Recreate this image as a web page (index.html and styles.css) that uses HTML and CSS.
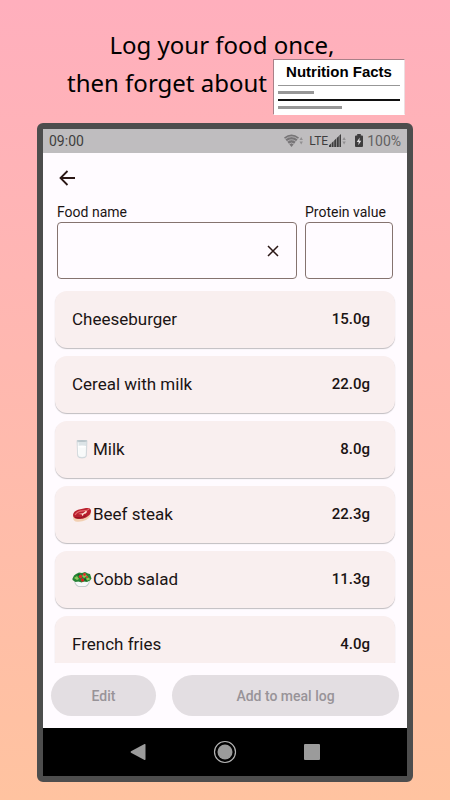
FILE: index.html
```html
<!DOCTYPE html>
<html lang="en">
<head>
    <meta charset="UTF-8">
    <meta name="viewport" content="width=device-width, initial-scale=1.0">
    <title>Food log</title>
    <link rel="stylesheet" href="styles.css">
</head>
<body>
    <header class="promo">
        <h1 class="promo-title">Log your food once,</h1>
        <div class="promo-row">
            <p class="promo-text">then forget about</p>
            <div class="facts">
                <strong class="facts-title">Nutrition Facts</strong>
                <div class="facts-line thin"></div>
                <div class="facts-line short"></div>
                <div class="facts-line bold"></div>
                <div class="facts-line medium"></div>
            </div>
        </div>
    </header>

    <main class="phone">
        <div class="status-bar">
            <span class="clock">09:00</span>
            <div class="status-icons">
                <svg width="21" height="14" viewBox="0 0 21 14" fill="#777577">
                    <path d="M0 3.5Q7.5-2.5 15 3.5L7.5 13z"/>
                    <path d="M1 5.2Q7.5.2 14 5.2M3 7.5Q7.5 4 12 7.5M5 10Q7.5 8 10 10" fill="none" stroke="#bfbdbf" stroke-width=".8"/>
                    <path d="M15.500 6l1.700-3 1.700 3zM15.500 7.500l1.700 3 1.700-3z" fill="#918f91"/>
                </svg>
                <span class="lte">LTE</span>
                <svg class="signal" width="18" height="14" viewBox="0 0 18 14" fill="#3e3d3e">
                    <path d="M0 13v-1.500l2-1.900V13zM2.600 13V9l2-1.900V13zM5.200 13V6.500l2-1.900V13zM7.800 13V4l2-1.900V13z"/>
                    <path d="M10.400 13V1.500L12 0v13z"/>
                    <path d="M13.400 6l1.700-3 1.700 3zM13.400 7.500l1.700 3 1.700-3z" fill="#918f91"/>
                </svg>
                <svg class="battery" width="8" height="14" viewBox="0 0 8 14">
                    <path d="M2.200 0h3.600v1.500H7q1 0 1 1V12q0 1-1 1H1q-1 0-1-1V2.500q0-1 1-1h1.200z" fill="#3e3d3e"/>
                    <path d="M4.700 3.500L1.700 8h2L3.300 11.300 6.300 6.800h-2z" fill="#e0dee0"/>
                </svg>
                <span class="percent">100%</span>
            </div>
        </div>

        <div class="toolbar">
            <button class="icon-button" type="button" aria-label="Back">
                <svg width="18" height="18" viewBox="0 0 18 18" fill="none" stroke="#2b1715" stroke-width="1.800">
                    <path d="M17 9H3M9.500 2L2.500 9l7 7"/>
                </svg>
            </button>
        </div>

        <form class="search">
            <div class="field field-name">
                <label for="foodName">Food name</label>
                <div class="box">
                    <input type="text" id="foodName" name="foodName">
                    <button class="icon-button clear" type="button" aria-label="Clear">
                        <svg width="12" height="12" viewBox="0 0 12 12" fill="none" stroke="#2b1715" stroke-width="1.500">
                            <path d="M1 1l10 10M11 1L1 11"/>
                        </svg>
                    </button>
                </div>
            </div>
            <div class="field field-protein">
                <label for="protein">Protein value</label>
                <div class="box">
                    <input type="text" id="protein" name="protein">
                </div>
            </div>
        </form>

        <ul class="foods">
            <li class="food"><span class="name">Cheeseburger</span><span class="grams">15.0g</span></li>
            <li class="food"><span class="name">Cereal with milk</span><span class="grams">22.0g</span></li>
            <li class="food">
                <span class="name">
                    <svg class="emoji" width="21" height="20" viewBox="0 0 21 20">
                        <path d="M5 1.500h10l-.7 15.500q-.2 2-4.300 2t-4.300-2z" fill="#dce4e7" stroke="#c3cdd1" stroke-width=".6"/>
                        <path d="M5.900 7.500h8.200l-.5 9q-.2 1.400-3.600 1.400t-3.600-1.400z" fill="#f8fafa"/>
                        <ellipse cx="10" cy="7.500" rx="4.100" ry="1" fill="#fff"/>
                        <ellipse cx="10" cy="1.900" rx="5" ry="1" fill="#b9c5ca"/>
                        <path d="M6.200 3.500l.3 12" stroke="#fff" stroke-width=".7"/>
                    </svg>Milk</span>
                <span class="grams">8.0g</span>
            </li>
            <li class="food">
                <span class="name">
                    <svg class="emoji" width="21" height="20" viewBox="0 0 21 20">
                        <path d="M1 13Q1 8 6 6.300L15 4q4-.4 4 4.500 0 4.500-5 7.500-5 2.500-10.500 1.500Q1 16.500 1 13z" fill="#f2d0b2"/>
                        <path d="M1 10.800Q1.500 7.400 6 5.800L14 4q5-.6 5 2.800 0 4-5 6.700-4.500 2.200-9.500 1.300Q1 14 1 10.800z" fill="#b91f2e"/>
                        <path d="M3 11q2-4 8-4.200Q16 6.600 17 5" fill="none" stroke="#e66a6d" stroke-width="1.200"/>
                        <path d="M6 10l5-.8 3-2.400 1.200.9-1.500 1.800-2 .5-1 2.300-1.100-2z" fill="#ffe7d7"/>
                        <path d="M3 13.500q6 1.500 11-1.800" fill="none" stroke="#8d1422"/>
                    </svg>Beef steak</span>
                <span class="grams">22.3g</span>
            </li>
            <li class="food">
                <span class="name">
                    <svg class="emoji" width="21" height="20" viewBox="0 0 21 20">
                        <path d="M1.500 9h17q-.6 7.500-5 9h-7Q2.100 16.500 1.500 9z" fill="#c5cccc"/>
                        <path d="M2.500 11q7.500 4 15 0-1 4.500-4.200 6H6.700Q3.500 15.500 2.500 11z" fill="#f7f9f9"/>
                        <path d="M.5 9.500L2 6.500l2-1.500 3-1.500 3 .5 3-1 3 1.500 2 .5 1.500 4.500-1.500 2-3 1.500-3-.5-2.500 1-3-1-3 .5-3-2z" fill="#268333"/>
                        <path d="M2 9l3-2 2 3-2 1zM10 7l3-3 2 3-3 2zM14 9.500l3-1 1 2-3 1z" fill="#8aca58"/>
                        <path d="M5 6l4 1-2-2zM12 11l3 1-2-3z" fill="#0d5424"/>
                        <circle cx="8.500" cy="7.500" r="1.700" fill="#e22c28"/>
                        <circle cx="12.500" cy="5.500" r="1.400" fill="#e22c28"/>
                        <circle cx="10.500" cy="11" r="1.700" fill="#d4201f"/>
                        <circle cx="15" cy="8" r="1.100" fill="#e8402e"/>
                    </svg>Cobb salad</span>
                <span class="grams">11.3g</span>
            </li>
            <li class="food"><span class="name">French fries</span><span class="grams">4.0g</span></li>
        </ul>

        <div class="actions">
            <button class="action edit" type="button" disabled>Edit</button>
            <button class="action add" type="button" disabled>Add to meal log</button>
        </div>

        <nav class="nav-bar">
            <button class="icon-button" type="button" aria-label="System back">
                <svg width="24" height="24" viewBox="0 0 24 24" fill="#9b9b9b">
                    <path d="M5 11.300L18.500 4q1-.4 1 .7v14.600q0 1.100-1 .7L5 12.700q-1-.7 0-1.400z"/>
                </svg>
            </button>
            <button class="icon-button" type="button" aria-label="Home">
                <svg width="24" height="24" viewBox="0 0 24 24">
                    <circle cx="12" cy="12" r="10.500" fill="none" stroke="#b4b4b4" stroke-width="1.200"/>
                    <circle cx="12" cy="12" r="7.500" fill="#9b9b9b"/>
                </svg>
            </button>
            <button class="icon-button" type="button" aria-label="Recent apps">
                <svg width="24" height="24" viewBox="0 0 24 24" fill="#9b9b9b">
                    <rect x="4" y="4" width="16" height="16" rx="1"/>
                </svg>
            </button>
        </nav>
    </main>
</body>
</html>
```
FILE: styles.css
```css
* {
    box-sizing: border-box;
}
body {
    display: flex;
    flex-direction: column;
    height: 100vh;
    margin: 0;
    padding: 29px 37px 18px;
    background: linear-gradient(#ffafbd, #ffc3a0);
    font-family: Roboto, sans-serif;
    color: #1b1414;
}
svg {
    display: block;
    flex: none;
}

/* headline */
.promo {
    padding-bottom: 8px;
    font-family: "Noto Sans", sans-serif;
    color: #000;
}
.promo-title,
.promo-text {
    margin: 0;
    font-size: 24px;
    font-weight: normal;
    line-height: 32px;
    white-space: nowrap;
}
.promo-title {
    padding-right: 6px;
    text-align: center;
}
.promo-row {
    display: flex;
    justify-content: center;
    gap: 6px;
    margin-top: -2px;
    padding-left: 22px;
}
.promo-text {
    padding-top: 8px;
}
.facts {
    display: flex;
    flex-direction: column;
    flex: none;
    width: 132px;
    height: 56px;
    padding: 3px 4px;
    background: #fff;
    border: 1px solid #a98088;
    border-right-color: #eddde0;
    border-bottom-color: #fff;
}
.facts-title {
    margin-bottom: 4px;
    font-family: "Liberation Sans", Arial, sans-serif;
    font-size: 15px;
    line-height: 18px;
    text-align: center;
}
.facts-line {
    flex: none;
    height: 3px;
    margin-bottom: 5px;
    background: #979797;
}
.facts-line.thin {
    height: 1px;
}
.facts-line.short {
    width: 36px;
}
.facts-line.bold {
    height: 2px;
    background: #111;
}
.facts-line.medium {
    width: 64px;
}

/* phone */
.phone {
    display: flex;
    flex: 1;
    flex-direction: column;
    min-height: 0;
    background: #fffbff;
    border: 6px solid #4d4d4d;
    border-radius: 6px;
}
.status-bar {
    display: flex;
    flex: none;
    align-items: center;
    justify-content: space-between;
    height: 24px;
    padding: 0 6px;
    background: #bfbdbf;
    color: #3e3d3e;
    font-size: 14px;
}
.status-icons {
    display: flex;
    align-items: center;
}
.lte {
    margin: 0 1px 0 4px;
    font-size: 12px;
}
.battery {
    margin: 0 4px 0 8px;
}
.percent {
    color: #626162;
}
.icon-button {
    display: flex;
    padding: 0;
    background: none;
    border: none;
    cursor: pointer;
}
.toolbar {
    display: flex;
    flex: none;
    align-items: center;
    height: 50px;
    padding: 0 15px;
}

/* search fields */
.search {
    display: flex;
    flex: none;
    gap: 8px;
    margin: 0;
    padding: 0 14px 12px;
}
.field {
    display: flex;
    flex-direction: column;
    gap: 1px;
}
.field-name {
    flex: 1;
    min-width: 0;
}
.field-protein {
    flex: none;
    width: 88px;
}
label {
    font-size: 14px;
    line-height: 18px;
    white-space: nowrap;
}
.box {
    display: flex;
    align-items: center;
    height: 57px;
    border: 1px solid #85736f;
    border-radius: 4px;
}
input {
    flex: 1;
    min-width: 0;
    height: 100%;
    padding: 0 14px;
    background: none;
    border: none;
    outline: none;
    font: 16px Roboto, sans-serif;
}
.clear {
    margin-right: 17px;
}

/* food list */
.foods {
    display: flex;
    flex: 1;
    flex-direction: column;
    gap: 8px;
    min-height: 0;
    margin: 0;
    padding: 0 12px;
    overflow: hidden;
    list-style: none;
}
.food {
    display: flex;
    flex: none;
    align-items: center;
    justify-content: space-between;
    height: 57px;
    padding: 0 25px 2px 17px;
    background: #f9efef;
    border-radius: 12px;
    box-shadow: 0 1px 1px rgba(0, 0, 0, 0.25);
}
.name {
    display: flex;
    align-items: center;
    font-size: 17px;
    line-height: 24px;
}
.grams {
    font-size: 15px;
    font-weight: 500;
}

/* bottom buttons */
.actions {
    display: flex;
    flex: none;
    gap: 16px;
    padding: 12px 8px;
}
.action {
    height: 41px;
    background: #e3dee2;
    border: none;
    border-radius: 21px;
    color: #989398;
    font: 500 14px Roboto, sans-serif;
}
.edit {
    width: 105px;
}
.add {
    flex: 1;
}
.nav-bar {
    display: flex;
    flex: none;
    align-items: center;
    justify-content: center;
    gap: 63px;
    height: 48px;
    background: #000;
}
```
